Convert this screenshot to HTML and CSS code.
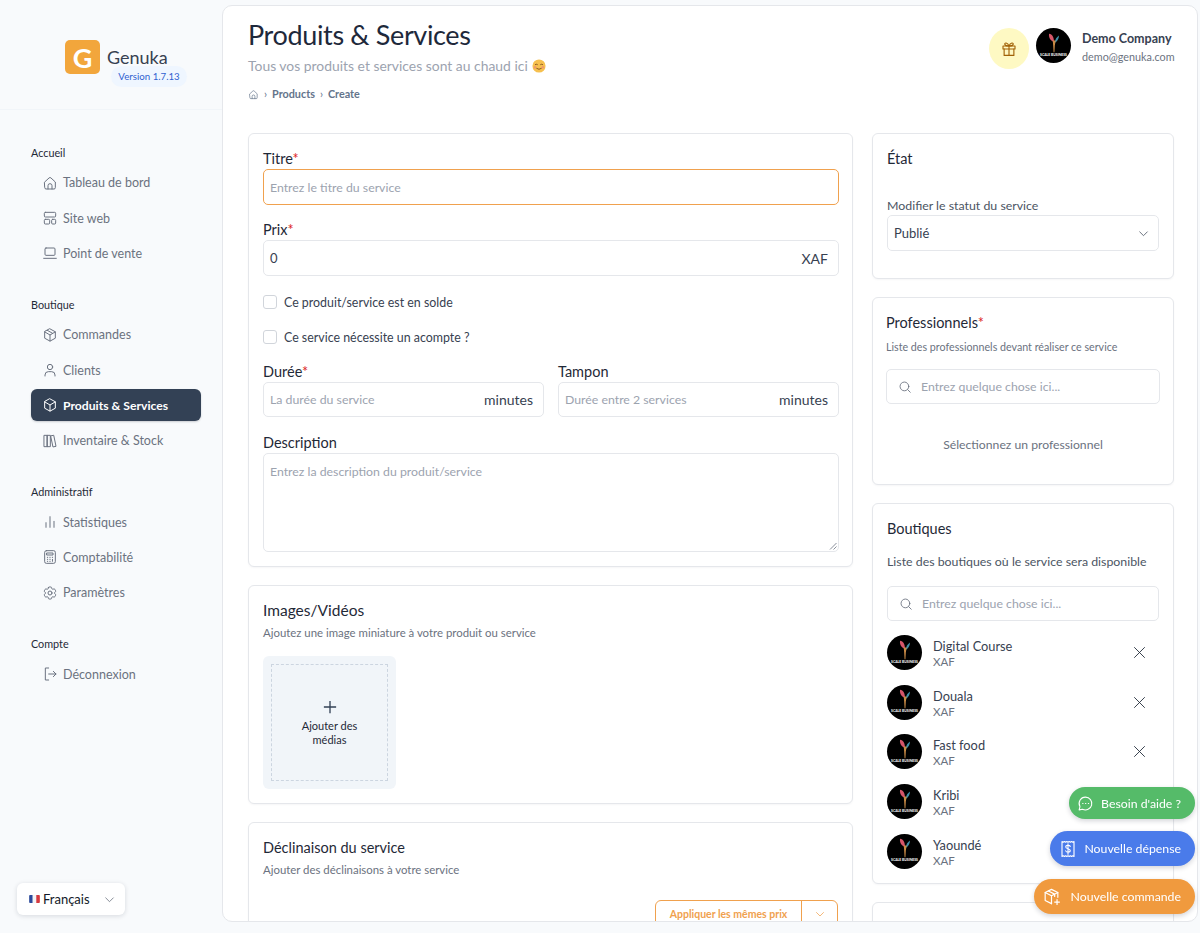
FILE: index.html
```html
<!DOCTYPE html>
<html lang="fr">
<head>
<meta charset="utf-8">
<title>Produits &amp; Services</title>
<link rel="stylesheet" href="styles.css">
</head>
<body>
<svg class="defs" width="0" height="0" aria-hidden="true">
  <defs>
    <symbol id="i-home" viewBox="0 0 24 24"><path d="M4 10.5 10.6 4.4a2 2 0 0 1 2.8 0L20 10.5V19a2 2 0 0 1-2 2H6a2 2 0 0 1-2-2z"/><path d="M9 21v-5a3 3 0 0 1 6 0v5"/></symbol>
    <symbol id="i-site" viewBox="0 0 24 24"><rect x="3.5" y="3.5" width="17" height="7" rx="1.5"/><rect x="3.5" y="14" width="8" height="7" rx="1.5"/><rect x="14.5" y="14" width="6" height="7" rx="1.5"/></symbol>
    <symbol id="i-laptop" viewBox="0 0 24 24"><rect x="4.5" y="4.5" width="15" height="11" rx="1.5"/><path d="M2.5 20h19"/></symbol>
    <symbol id="i-box" viewBox="0 0 24 24"><path d="M12 2.8 20 7.2v9.6l-8 4.4-8-4.4V7.2z"/><path d="M4.2 7.4 12 12l7.8-4.6M12 12v9M8 5l8 4.6"/></symbol>
    <symbol id="i-box2" viewBox="0 0 24 24"><path d="M12 2.8 20 7.2v9.6l-8 4.4-8-4.4V7.2z"/><path d="M4.2 7.4 12 12l7.8-4.6M12 12v9"/></symbol>
    <symbol id="i-user" viewBox="0 0 24 24"><circle cx="12" cy="7.5" r="4"/><path d="M4.5 21v-1.5a5 5 0 0 1 5-5h5a5 5 0 0 1 5 5V21"/></symbol>
    <symbol id="i-lib" viewBox="0 0 24 24"><rect x="3.5" y="3.5" width="4.5" height="17"/><rect x="8" y="3.5" width="4.5" height="17"/><path d="M13.5 4.2 17.6 3.4 21 20l-4 .8z"/></symbol>
    <symbol id="i-chart" viewBox="0 0 24 24"><path d="M6 20v-7M12 20V4M18 20v-9"/></symbol>
    <symbol id="i-calc" viewBox="0 0 24 24"><rect x="4" y="2.5" width="16" height="19" rx="2.5"/><rect x="7.5" y="6" width="9" height="3"/><path d="M8 12.5h.6M11.7 12.5h.6M15.4 12.5h.6M8 15.5h.6M11.7 15.5h.6M8 18.5h.6M11.7 18.5h.6M15.7 15.5v3"/></symbol>
    <symbol id="i-cog" viewBox="0 0 24 24"><path d="M9.594 3.94c.09-.542.56-.94 1.11-.94h2.593c.55 0 1.02.398 1.11.94l.213 1.281c.063.374.313.686.645.87.074.04.147.083.22.127.324.196.72.257 1.075.124l1.217-.456a1.125 1.125 0 011.37.49l1.296 2.247a1.125 1.125 0 01-.26 1.431l-1.003.827c-.293.24-.438.613-.431.992a6.759 6.759 0 010 .255c-.007.378.138.75.43.99l1.005.828c.424.35.534.954.26 1.43l-1.298 2.247a1.125 1.125 0 01-1.369.491l-1.217-.456c-.355-.133-.75-.072-1.076.124a6.57 6.57 0 01-.22.128c-.331.183-.581.495-.644.869l-.213 1.28c-.09.543-.56.941-1.11.941h-2.594c-.55 0-1.02-.398-1.11-.94l-.213-1.281c-.062-.374-.312-.686-.644-.87a6.52 6.52 0 01-.22-.127c-.325-.196-.72-.257-1.076-.124l-1.217.456a1.125 1.125 0 01-1.369-.49l-1.297-2.247a1.125 1.125 0 01.26-1.431l1.004-.827c.292-.24.437-.613.43-.992a6.932 6.932 0 010-.255c.007-.378-.138-.75-.43-.99l-1.004-.828a1.125 1.125 0 01-.26-1.43l1.297-2.247a1.125 1.125 0 011.37-.491l1.216.456c.356.133.751.072 1.076-.124.072-.044.146-.087.22-.128.332-.183.582-.495.644-.869l.214-1.281z"/><circle cx="12" cy="12" r="3"/></symbol>
    <symbol id="i-logout" viewBox="0 0 24 24"><path d="M10 3H5v18h5"/><path d="M10 12h11M17 8l4 4-4 4"/></symbol>
    <symbol id="i-chev" viewBox="0 0 24 24"><path d="M5 9l7 7 7-7"/></symbol>
    <symbol id="i-search" viewBox="0 0 24 24"><circle cx="11" cy="11" r="7.5"/><path d="M16.5 16.5 21 21"/></symbol>
    <symbol id="i-x" viewBox="0 0 24 24"><path d="M4 4l16 16M20 4 4 20"/></symbol>
    <symbol id="i-bird" viewBox="0 0 24 24"><path class="bird-a" d="M6 1c4 .5 6 4.500 6 10-4-1.500-6.500-5-6-10z"/><path class="bird-b" d="M18 3c0 4-2 7-5 9 0-4 2-7 5-9z"/><path class="bird-c" d="M10.500 9h3.500l-1 6-.5 8h-1l-.5-8z"/></symbol>
  </defs>
</svg>

<aside class="sidebar">
  <div class="brand">
    <div class="brand-mark">G</div>
    <div class="brand-text">
      <span class="brand-name">Genuka</span>
      <span class="brand-version">Version 1.7.13</span>
    </div>
  </div>
  <nav class="nav">
    <section class="nav-group">
      <h4 class="nav-title">Accueil</h4>
      <a class="nav-item"><svg class="ico"><use href="#i-home"/></svg>Tableau de bord</a>
      <a class="nav-item"><svg class="ico"><use href="#i-site"/></svg>Site web</a>
      <a class="nav-item"><svg class="ico"><use href="#i-laptop"/></svg>Point de vente</a>
    </section>
    <section class="nav-group">
      <h4 class="nav-title">Boutique</h4>
      <a class="nav-item"><svg class="ico"><use href="#i-box"/></svg>Commandes</a>
      <a class="nav-item"><svg class="ico"><use href="#i-user"/></svg>Clients</a>
      <a class="nav-item active"><svg class="ico"><use href="#i-box2"/></svg>Produits &amp; Services</a>
      <a class="nav-item"><svg class="ico"><use href="#i-lib"/></svg>Inventaire &amp; Stock</a>
    </section>
    <section class="nav-group">
      <h4 class="nav-title">Administratif</h4>
      <a class="nav-item"><svg class="ico"><use href="#i-chart"/></svg>Statistiques</a>
      <a class="nav-item"><svg class="ico"><use href="#i-calc"/></svg>Comptabilité</a>
      <a class="nav-item"><svg class="ico"><use href="#i-cog"/></svg>Paramètres</a>
    </section>
    <section class="nav-group">
      <h4 class="nav-title">Compte</h4>
      <a class="nav-item"><svg class="ico"><use href="#i-logout"/></svg>Déconnexion</a>
    </section>
  </nav>
  <button class="lang">
    <svg class="flag" viewBox="0 0 12 9"><rect width="4" height="9" fill="#2b4a9b"/><rect x="4" width="4" height="9" fill="#f3f4f6"/><rect x="8" width="4" height="9" fill="#d5393f"/></svg>
    <span>Français</span>
    <svg class="ico lang-chev"><use href="#i-chev"/></svg>
  </button>
</aside>

<main class="panel">
  <header class="top">
    <div>
      <h1 class="page-title">Produits &amp; Services</h1>
      <p class="page-sub">Tous vos produits et services sont au chaud ici
        <svg class="emoji" viewBox="0 0 16 16"><circle cx="8" cy="8" r="7.5" fill="#f6c04f"/><path d="M3.5 6.5q1.5-1 3 0M9.5 6.5q1.500-1 3 0" fill="none" stroke="#7a4a1c" stroke-width="1"/><path d="M5 10.500q3 2.500 6 0" fill="none" stroke="#7a4a1c" stroke-width="1"/><circle cx="3.500" cy="9.500" r="1.500" fill="#f09a6c"/><circle cx="12.500" cy="9.500" r="1.500" fill="#f09a6c"/></svg>
      </p>
      <div class="crumbs">
        <svg class="ico crumb-home"><use href="#i-home"/></svg>
        <span class="sep">›</span><span>Products</span><span class="sep">›</span><span>Create</span>
      </div>
    </div>
    <div class="account">
      <div class="gift"><svg class="ico" viewBox="0 0 24 24"><rect x="4" y="8" width="16" height="4"/><path d="M5.500 12v8.500h13V12M12 8v12.500M12 8C10 3 5.500 3 6.500 6c.4 1.300 3 2 5.500 2zM12 8c2-5 6.500-5 5.500-2-.4 1.300-3 2-5.500 2z"/></svg></div>
      <div class="avatar avatar-top"><svg class="bird"><use href="#i-bird"/></svg><span class="avatar-text">SCALE BUSINESS</span></div>
      <div class="account-text">
        <strong>Demo Company</strong>
        <span>demo@genuka.com</span>
      </div>
    </div>
  </header>

  <div class="columns">
    <div class="col">
      <section class="card form-card">
        <label class="label">Titre<em>*</em></label>
        <div class="input focus"><span class="ph">Entrez le titre du service</span></div>
        <label class="label">Prix<em>*</em></label>
        <div class="input"><span class="val">0</span><span class="suffix">XAF</span></div>
        <label class="check check-first"><span class="box"></span>Ce produit/service est en solde</label>
        <label class="check"><span class="box"></span>Ce service nécessite un acompte ?</label>
        <div class="two">
          <div>
            <label class="label label-flat">Durée<em>*</em></label>
            <div class="input input-short"><span class="ph">La durée du service</span><span class="suffix">minutes</span></div>
          </div>
          <div>
            <label class="label label-flat">Tampon</label>
            <div class="input input-short"><span class="ph">Durée entre 2 services</span><span class="suffix">minutes</span></div>
          </div>
        </div>
        <label class="label label-desc">Description</label>
        <div class="textarea"><span class="ph">Entrez la description du produit/service</span>
          <svg class="grip" viewBox="0 0 8 8"><path d="M1 7.500 7.500 1M4.500 7.500 7.500 4.500"/></svg>
        </div>
      </section>

      <section class="card media-card">
        <h3 class="card-title media-title">Images/Vidéos</h3>
        <p class="card-sub">Ajoutez une image miniature à votre produit ou service</p>
        <div class="media">
          <div class="media-inner">
            <svg class="plus" viewBox="0 0 16 16"><path d="M8 1v14M1 8h14"/></svg>
            <span>Ajouter des médias</span>
          </div>
        </div>
      </section>

      <section class="card variant-card">
        <h3 class="card-title">Déclinaison du service</h3>
        <p class="card-sub">Ajouter des déclinaisons à votre service</p>
        <div class="split">
          <span class="split-main">Appliquer les mêmes prix</span>
          <span class="split-side"><svg class="ico"><use href="#i-chev"/></svg></span>
        </div>
      </section>
    </div>

    <div class="col">
      <section class="card state-card">
        <h3 class="card-title">État</h3>
        <p class="field-hint">Modifier le statut du service</p>
        <div class="input select"><span class="val">Publié</span><svg class="ico select-chev"><use href="#i-chev"/></svg></div>
      </section>

      <section class="card pro-card">
        <label class="label label-pro">Professionnels<em>*</em></label>
        <p class="card-sub pro-sub">Liste des professionnels devant réaliser ce service</p>
        <div class="input search"><svg class="ico search-ico"><use href="#i-search"/></svg><span class="ph">Entrez quelque chose ici...</span></div>
        <p class="empty">Sélectionnez un professionnel</p>
      </section>

      <section class="card shops-card">
        <h3 class="card-title">Boutiques</h3>
        <p class="field-hint shops-hint">Liste des boutiques où le service sera disponible</p>
        <div class="input search"><svg class="ico search-ico"><use href="#i-search"/></svg><span class="ph">Entrez quelque chose ici...</span></div>
        <ul class="shops">
          <li class="shop"><div class="avatar"><svg class="bird"><use href="#i-bird"/></svg><span class="avatar-text">SCALE BUSINESS</span></div><div class="shop-text"><strong>Digital Course</strong><span>XAF</span></div><svg class="ico shop-x"><use href="#i-x"/></svg></li>
          <li class="shop"><div class="avatar"><svg class="bird"><use href="#i-bird"/></svg><span class="avatar-text">SCALE BUSINESS</span></div><div class="shop-text"><strong>Douala</strong><span>XAF</span></div><svg class="ico shop-x"><use href="#i-x"/></svg></li>
          <li class="shop"><div class="avatar"><svg class="bird"><use href="#i-bird"/></svg><span class="avatar-text">SCALE BUSINESS</span></div><div class="shop-text"><strong>Fast food</strong><span>XAF</span></div><svg class="ico shop-x"><use href="#i-x"/></svg></li>
          <li class="shop"><div class="avatar"><svg class="bird"><use href="#i-bird"/></svg><span class="avatar-text">SCALE BUSINESS</span></div><div class="shop-text"><strong>Kribi</strong><span>XAF</span></div></li>
          <li class="shop"><div class="avatar"><svg class="bird"><use href="#i-bird"/></svg><span class="avatar-text">SCALE BUSINESS</span></div><div class="shop-text"><strong>Yaoundé</strong><span>XAF</span></div></li>
        </ul>
      </section>

      <section class="card last-card"></section>
    </div>
  </div>
</main>

<div class="fabs">
  <button class="fab fab-green"><svg class="ico" viewBox="0 0 24 24"><path d="M12 3a9 9 0 1 1-4.200 17L3 21l1.200-4.500A9 9 0 0 1 12 3z"/><path d="M8 12h.5M12 12h.500M16 12h.500"/></svg><span>Besoin d'aide ?</span></button>
  <button class="fab fab-blue"><svg class="ico" viewBox="0 0 24 24"><path d="M4 2l1.600 1 1.600-1 1.600 1 1.600-1 1.600 1 1.600-1 1.600 1 1.600-1 1.600 1L20 2v20l-1.600-1-1.600 1-1.600-1-1.600 1-1.600-1-1.600 1-1.600-1-1.600 1-1.600-1L4 22z"/><path d="M15 8.500c-.5-1-1.500-1.500-3-1.500-1.700 0-3 .9-3 2.300 0 3 6 1.700 6 4.700 0 1.300-1.300 2.200-3 2.200-1.500 0-2.600-.6-3.100-1.700M12 5v14"/></svg><span>Nouvelle dépense</span></button>
  <button class="fab fab-orange"><svg class="ico" viewBox="0 0 24 24"><path d="M12 21 4 17V7l8-4 8 4v6"/><path d="M4 7l8 4 8-4M12 11v10M8 5l8 4v3"/><path d="M19 16v6M16 19h6"/></svg><span>Nouvelle commande</span></button>
</div>
</body>
</html>
```
FILE: styles.css
```css
* { box-sizing: border-box; }
html, body { margin: 0; height: 933px; overflow: hidden; }
body {
  display: flex;
  background: #f8fafc;
  font-family: "Lato", "Noto Sans", sans-serif;
  color: #374151;
}
.defs { position: absolute; }
h1, h3, h4, p, ul { margin: 0; padding: 0; }
ul { list-style: none; }
em { font-style: normal; color: #dc2626; }
.ico { width: 16px; height: 16px; fill: none; stroke: currentColor; stroke-width: 1.5; stroke-linecap: round; stroke-linejoin: round; flex: none; }

/* Sidebar */
.sidebar { width: 222px; flex: none; height: 933px; display: flex; flex-direction: column; }
.brand { height: 110px; border-bottom: 1px solid #f1f5f9; padding: 40px 0 0 65px; display: flex; gap: 7px; align-items: flex-start; }
.brand-mark { width: 35px; height: 34px; border-radius: 5px; background: #f2a63c; color: #fff; font-size: 27px; font-weight: 700; display: flex; align-items: center; justify-content: center; }
.brand-text { display: flex; flex-direction: column; align-items: flex-start; padding-top: 7px; }
.brand-name { font-size: 18px; line-height: 20px; color: #374151; }
.brand-version { margin: -1px 0 0 4px; width: 76px; text-align: center; height: 21px; line-height: 21px; border-radius: 11px; background: #eff6ff; color: #2f5fd0; font-size: 9.7px; white-space: nowrap; }
.nav { padding: 36px 21px 0 31px; display: flex; flex-direction: column; gap: 28.5px; }
.nav-group { display: flex; flex-direction: column; gap: 3.3px; }
.nav-title { font-size: 10.8px; line-height: 14px; font-weight: 400; color: #1f2937; margin-bottom: 3.6px; }
.nav-item { height: 32px; display: flex; align-items: center; gap: 5px; padding-left: 11px; border-radius: 6px; font-size: 12.5px; color: #6b7280; }
.nav-item.active { background: #334155; color: #fff; font-weight: 700; font-size: 12.2px; box-shadow: 0 1px 2px rgba(15,23,42,.2); }
.lang { margin: auto 0 18px 17px; width: 108px; height: 32px; border: 0; border-radius: 6px; background: #fff; box-shadow: 0 1px 5px rgba(15,23,42,.14); display: flex; align-items: center; padding: 0 0 0 12px; font: inherit; font-size: 13px; color: #111827; }
.flag { width: 11px; height: 8px; margin-right: 3px; border-radius: 1px; }
.lang-chev { margin-left: auto; margin-right: 9px; width: 13px; height: 13px; color: #6b7280; }

/* Main panel */
.panel { width: 976px; flex: none; height: 917px; margin-top: 5px; padding: 12px 0 0 25px; background: #fff; border: 1px solid #e5e7eb; border-radius: 10px; overflow: hidden; }
.top { display: flex; justify-content: space-between; align-items: flex-start; padding-right: 23px; height: 115px; }
.page-title { font-size: 27px; letter-spacing: -.35px; line-height: 34px; font-weight: 400; color: #1e293b; }
.page-sub { margin-top: 4px; font-size: 13.9px; line-height: 20px; color: #9ca3af; display: flex; align-items: center; gap: 4px; }
.emoji { width: 14px; height: 14px; }
.crumbs { margin-top: 11px; display: flex; align-items: center; gap: 5px; font-size: 10.8px; line-height: 14px; font-weight: 700; color: #64748b; }
.crumb-home { width: 11px; height: 11px; }
.sep { font-weight: 400; }
.account { display: flex; align-items: flex-start; padding-top: 10px; }
.gift { width: 40px; height: 41px; border-radius: 50%; background: #fef9c3; display: flex; align-items: center; justify-content: center; color: #a16207; margin-right: 7px; }
.gift .ico { width: 18px; height: 18px; }
.account-text { margin-left: 11px; padding-top: 3px; width: 92px; display: flex; flex-direction: column; gap: 3px; font-size: 10.8px; color: #6b7280; }
.account-text strong { font-size: 12.5px; line-height: 16px; font-weight: 700; color: #374151; }
.avatar { width: 35px; height: 35px; flex: none; border-radius: 50%; background: #000; display: flex; flex-direction: column; align-items: center; justify-content: center; overflow: hidden; }
.bird { width: 20px; height: 20px; margin-top: -1px; }
.bird-a { fill: #d6566a; }
.bird-b { fill: #3f8fa8; }
.bird-c { fill: #c98a45; }
.avatar-text { font-size: 3.4px; line-height: 5px; font-weight: 700; color: #fff; white-space: nowrap; }

/* Cards */
.columns { display: grid; grid-template-columns: 605px 302px; gap: 19px; }
.col { display: flex; flex-direction: column; gap: 18px; }
.card { background: #fff; border: 1px solid #e5e7eb; border-radius: 6px; box-shadow: 0 1px 2px rgba(15,23,42,.04); padding: 15px 14px; }
.form-card { padding: 15px 13px 14px 14px; }
.label { display: block; margin-top: 15px; font-size: 14.5px; line-height: 20px; color: #1f2937; }
.label:first-child { margin-top: 0; }
.label-flat { margin-top: 0; }
.label-desc { margin-top: 16px; }
.input { height: 36px; display: flex; align-items: center; justify-content: space-between; padding: 0 10px 0 6px; border: 1px solid #e5e7eb; border-radius: 5px; background: #fff; font-size: 13px; }
.input-short { height: 35px; }
.input.focus { border-color: #f0a14e; }
.ph { color: #9ca3af; font-size: 12.3px; }
.val { color: #374151; }
.suffix { font-size: 14px; color: #374151; }
.check { display: flex; align-items: center; gap: 7px; height: 20px; margin-top: 15px; font-size: 12.4px; color: #374151; }
.check-first { margin-top: 16px; }
.box { width: 14px; height: 14px; border: 1px solid #d1d5db; border-radius: 3px; background: #fff; flex: none; }
.two { margin-top: 14px; display: grid; grid-template-columns: 281px 281px; gap: 14px; padding-top: 1px; }
.textarea { position: relative; height: 99px; padding: 6px 6px; border: 1px solid #e5e7eb; border-radius: 5px; }
.grip { position: absolute; right: 1px; bottom: 1px; width: 8px; height: 8px; fill: none; stroke: #6b7280; stroke-width: .8; }

.card-title { font-size: 14.5px; line-height: 20px; font-weight: 400; color: #1f2937; }
.media-title { font-size: 15.5px; line-height: 18px; padding-bottom: 2px; }
.card-sub { margin-top: 4px; font-size: 11.4px; line-height: 16px; color: #6b7280; }
.media-card { height: 219px; padding-top: 15px; }
.media { margin-top: 15px; width: 133px; height: 133px; padding: 8px; border-radius: 6px; background: #f1f5f9; }
.media-inner { width: 100%; height: 100%; border: 1.5px dashed #ccd5e0; display: flex; flex-direction: column; align-items: center; justify-content: center; padding: 2px 19px 0; font-size: 11px; line-height: 14px; text-align: center; color: #1f2937; }
.plus { width: 14px; height: 14px; fill: none; stroke: #334155; stroke-width: 1.5; margin-bottom: 5px; }
.variant-card { flex: 1; }
.split { margin: 22px 0 0 auto; display: flex; width: 183px; height: 28px; border: 1px solid #f0a14e; border-radius: 6px; color: #f0a14e; font-size: 10.5px; font-weight: 700; }
.split-main { flex: 1; display: flex; align-items: center; justify-content: center; border-right: 1px solid #f0a14e; }
.split-side { width: 35px; display: flex; align-items: center; justify-content: center; }
.split-side .ico { width: 12px; height: 12px; }

.state-card { height: 146px; }
.field-hint { font-size: 12.35px; line-height: 16px; color: #4b5563; margin-top: 29px; }
.select { margin-top: 1px; }
.select-chev { width: 13px; height: 13px; color: #4b5563; margin-right: -2px; }
.pro-card { height: 188px; padding-left: 13px; padding-right: 13px; }
.label-pro { margin-top: 0; }
.pro-sub { margin-top: 6px; font-size: 10.7px; }
.search { height: 35px; justify-content: flex-start; gap: 9px; padding-left: 11px; margin-top: 14px; }
.search-ico { width: 14px; height: 14px; color: #6b7280; }
.empty { margin-top: 32px; text-align: center; font-size: 12.2px; line-height: 18px; color: #6b7280; }
.shops-card { height: 381px; }
.shops-hint { margin-top: 15px; }
.shops-card .search { margin-top: 16px; }
.shops { margin-top: 14px; display: flex; flex-direction: column; gap: 14.7px; }
.shop { display: flex; align-items: center; height: 35px; }
.shop-text { margin-left: 11px; flex: 1; display: flex; flex-direction: column; gap: 1px; font-size: 11.5px; color: #6b7280; padding-top: 1px; }
.shop-text strong { font-size: 12.8px; line-height: 16px; font-weight: 400; color: #374151; }
.shop-x { width: 15px; height: 15px; margin-right: 12px; color: #1f2937; stroke-width: 1.4; }
.last-card { height: 80px; }

/* Floating buttons */
.fabs { position: fixed; right: 5px; top: 787px; display: flex; flex-direction: column; align-items: flex-end; gap: 12px; }
.fab { display: flex; align-items: center; justify-content: space-between; border: 0; border-radius: 18px; color: #fff; font: inherit; font-size: 12.3px; padding: 0 14px 0 8px; white-space: nowrap; box-shadow: 0 2px 5px rgba(15,23,42,.18); }
.fab-green { height: 32px; width: 126px; background: #55bb69; }
.fab-green .ico { width: 17px; height: 17px; }
.fab-blue { height: 35px; width: 145px; background: #4a7bea; padding-left: 9px; }
.fab-blue .ico { width: 18px; height: 18px; }
.fab-orange { height: 35px; width: 161px; background: #f09a3e; margin-top: 1px; }
.fab-orange .ico { width: 19px; height: 19px; }
```
